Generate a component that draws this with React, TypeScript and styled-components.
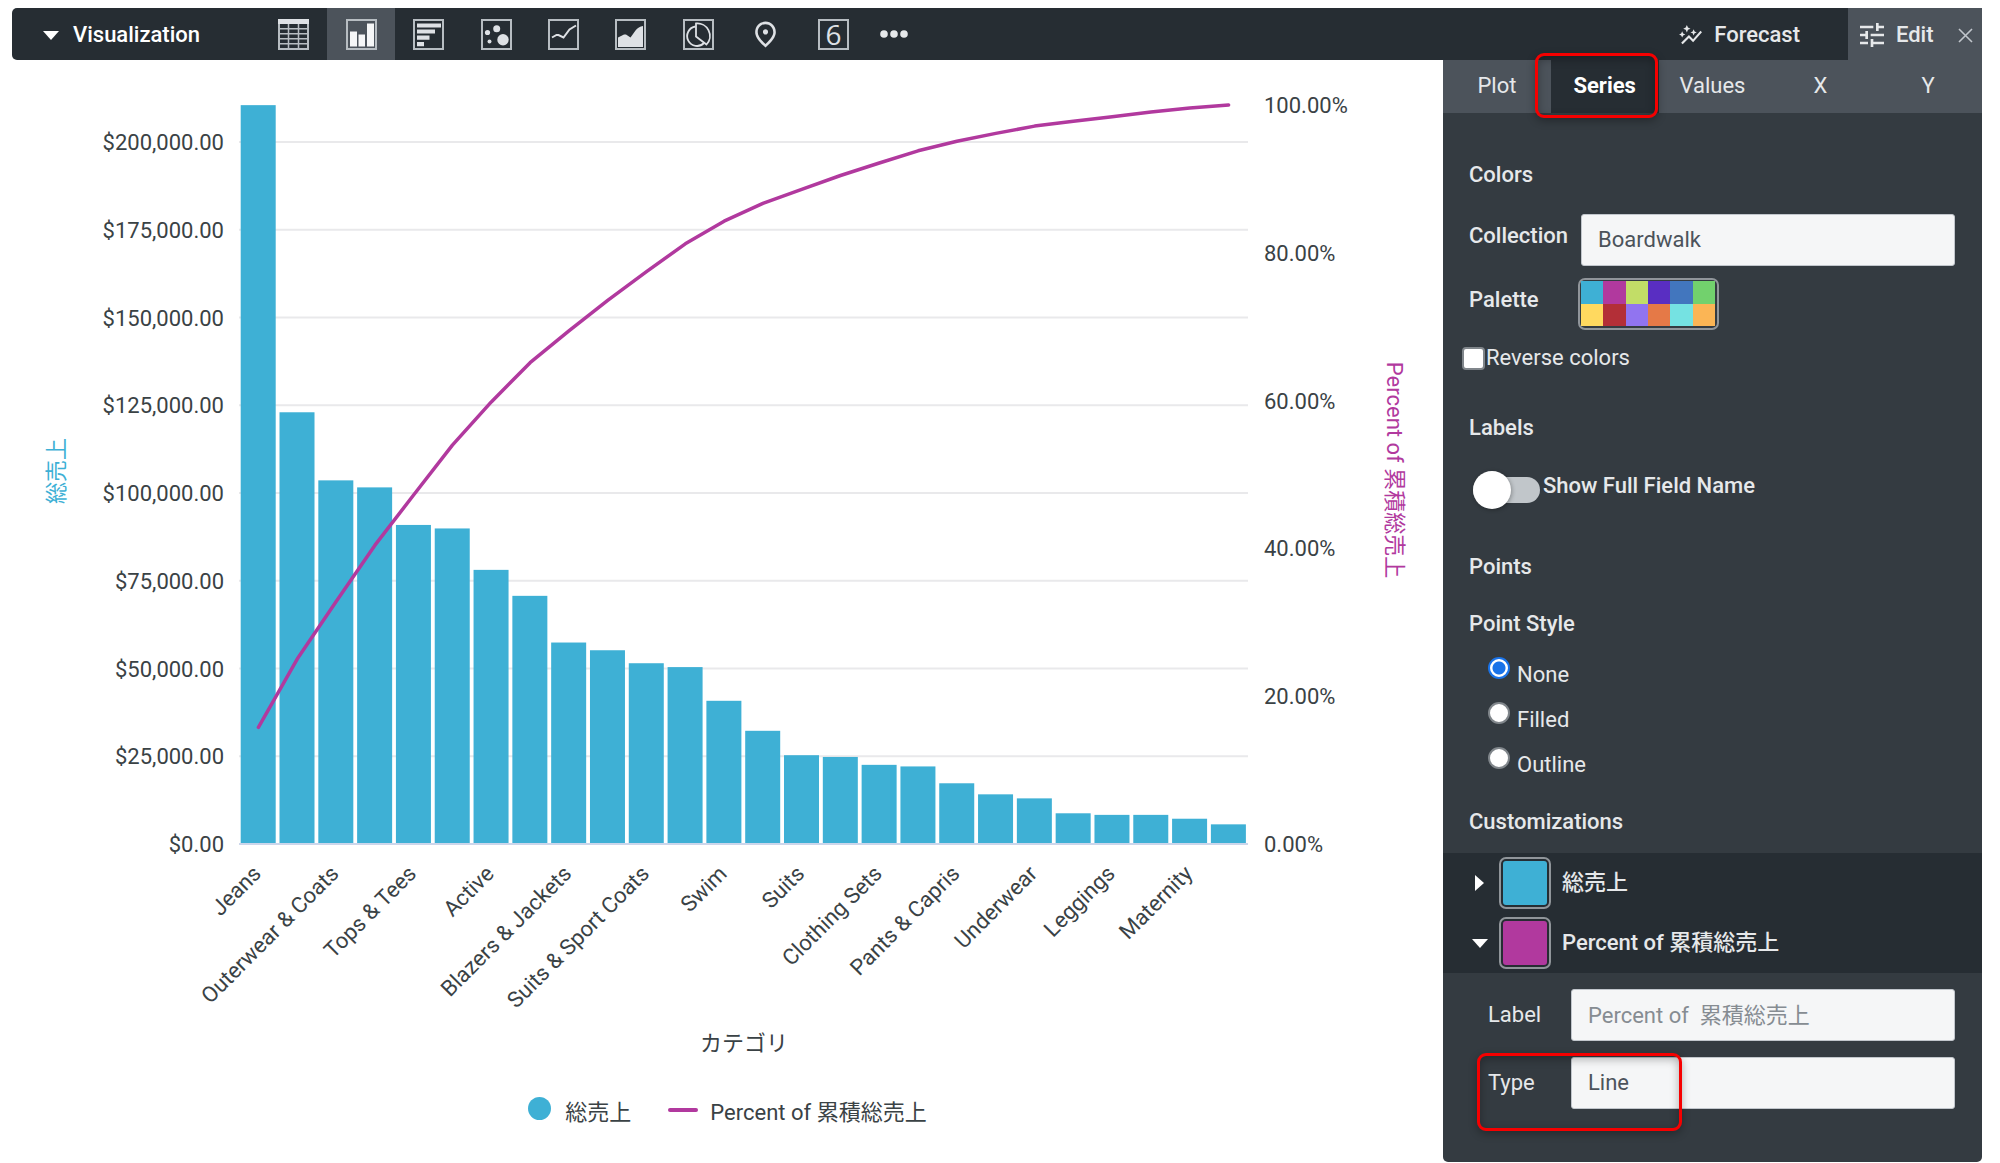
import React, { useState } from "react";
import styled, { createGlobalStyle, css } from "styled-components";
import { MdAutoGraph, MdOutlinePlace, MdTune } from "react-icons/md";

const color = {
  ink: "#262d33",
  panel: "#343b41",
  raised: "#4c535b",
  text: "#e6e8ea",
  chartText: "#3a4245",
  field: "#f5f6f7",
  blue: "#3eb0d5",
  magenta: "#b1399e",
  grid: "#e9e9eb",
  axis: "#ccd6eb",
  outline: "#90959a",
  callout: "#f60000",
};

const fontStack = `Roboto, "Noto Sans CJK JP", sans-serif`;

const GlobalStyle = createGlobalStyle`
  *, *::before, *::after { box-sizing: border-box; }
  body {
    margin: 0;
    background: #fff;
    color: ${color.chartText};
    font: 400 22px/26px ${fontStack};
  }
  button, input, select { font: inherit; color: inherit; }
  button { border: 0; padding: 0; background: none; cursor: pointer; }
  fieldset { border: 0; margin: 0; padding: 0; min-width: 0; }
`;

/* ---------- data ---------- */

const sales: [string, number][] = [
  ["Jeans", 210500],
  ["", 123000],
  ["Outerwear & Coats", 103600],
  ["", 101600],
  ["Tops & Tees", 90900],
  ["", 89900],
  ["Active", 78100],
  ["", 70700],
  ["Blazers & Jackets", 57400],
  ["", 55200],
  ["Suits & Sport Coats", 51500],
  ["", 50400],
  ["Swim", 40800],
  ["", 32250],
  ["Suits", 25300],
  ["", 24800],
  ["Clothing Sets", 22550],
  ["", 22100],
  ["Pants & Capris", 17300],
  ["", 14150],
  ["Underwear", 13000],
  ["", 8750],
  ["Leggings", 8300],
  ["", 8300],
  ["Maternity", 7200],
  ["", 5600],
];

const palette = [
  "#3eb0d5", "#b1399e", "#c2dd67", "#592ec2", "#4276be", "#72d16d",
  "#ffd95f", "#b32f37", "#9174f0", "#e57947", "#75e2e2", "#fbb555",
];

/* ---------- page ---------- */

const Page = styled.main`
  padding: 8px 18px 2px 12px;
`;

const Header = styled.header`
  display: flex;
  height: 52px;
  background: ${color.ink};
  border-radius: 5px 0 0 5px;
  color: ${color.text};
  font-weight: 500;
`;

const Body = styled.div`
  display: grid;
  grid-template-columns: minmax(0, 1fr) 539px;
  align-items: start;
`;

/* ---------- header ---------- */

const TitleButton = styled.button`
  display: flex;
  align-items: center;
  gap: 14px;
  width: 248px;
  padding: 2px 0 0 31px;
  color: #fff;
  font-weight: 500;
`;

const VizTypes = styled.nav`
  display: flex;
  width: 607px;
`;

const VizButton = styled.button<{ $active: boolean }>`
  flex: 1;
  display: grid;
  place-items: center;
  color: ${(p) => (p.$active ? "#f5f6f7" : "#dee1e5")};
  background: ${(p) => (p.$active ? color.raised : "transparent")};
`;

const MoreButton = styled.button`
  display: grid;
  place-items: center;
  width: 54px;
  color: ${color.text};
`;

const ForecastButton = styled.button`
  display: flex;
  align-items: center;
  gap: 11px;
  margin-left: auto;
  padding: 2px 48px 0 0;
`;

const EditGroup = styled.div`
  display: flex;
  justify-content: space-between;
  width: 134px;
  padding: 2px 8px 0;
  background: ${color.raised};
`;

const EditButton = styled.button`
  display: flex;
  align-items: center;
  gap: 8px;
`;

const CloseButton = styled.button`
  display: grid;
  place-items: center;
  width: 18px;
`;

/* ---------- chart ---------- */

const ChartFigure = styled.figure`
  margin: 0;
`;

const ChartSvg = styled.svg`
  display: block;
  width: 100%;
  height: auto;
  font-family: ${fontStack};
  font-size: 22px;
  fill: ${color.chartText};
`;

const Legend = styled.ul`
  display: flex;
  justify-content: center;
  gap: 37px;
  list-style: none;
  margin: 0;
  padding: 22px 0 0;
`;

const LegendItem = styled.li`
  display: flex;
  align-items: center;
  gap: 12px;
`;

const LegendMark = styled.span<{ $kind: "dot" | "line"; $color: string }>`
  background: ${(p) => p.$color};
  ${(p) =>
    p.$kind === "dot"
      ? css`
          width: 23px;
          height: 23px;
          margin: 0 2px 8px 0;
          border-radius: 50%;
        `
      : css`
          width: 30px;
          height: 4px;
          margin-bottom: 6px;
          border-radius: 2px;
        `}
`;

/* ---------- side panel ---------- */

const Panel = styled.aside`
  background: ${color.panel};
  border-radius: 0 0 5px 5px;
  color: ${color.text};
  padding-bottom: 53px;
`;

const Tabs = styled.div`
  display: flex;
  height: 53px;
  background: ${color.raised};
`;

const TabButton = styled.button<{ $active: boolean }>`
  position: relative;
  flex: 1;
  padding-bottom: 2px;
  background: ${(p) => (p.$active ? color.ink : "transparent")};
  color: ${(p) => (p.$active ? "#fff" : color.text)};
  font-weight: ${(p) => (p.$active ? 700 : 400)};
`;

const calloutBox = css`
  position: absolute;
  border: 3px solid ${color.callout};
  border-radius: 9px;
  box-shadow: 0 3px 8px rgba(0, 0, 0, 0.3), inset 0 3px 10px rgba(0, 0, 0, 0.3);
  pointer-events: none;
`;

const TabCallout = styled.span`
  ${calloutBox}
  inset: -7px 1px -5px -16px;
`;

const FieldCallout = styled.span`
  ${calloutBox}
  left: -11px;
  top: -4px;
  width: 205px;
  height: 78px;
`;

const Section = styled.section`
  padding: 0 27px 0 26px;
  margin-top: 44px;

  &:first-of-type {
    margin-top: 49px;
  }
`;

const Heading = styled.h2`
  margin: 0;
  font-size: 22px;
  line-height: 26px;
  font-weight: 500;
`;

const FieldRow = styled.div<{ $top: number }>`
  display: grid;
  grid-template-columns: 112px minmax(0, 1fr);
  align-items: start;
  margin-top: ${(p) => p.$top}px;
`;

const FieldLabel = styled.label`
  padding-top: 9px;
  font-weight: 500;
`;

const control = css`
  appearance: none;
  width: 100%;
  height: 52px;
  margin: 0;
  padding: 0 16px;
  border: 1px solid #c1c6cc;
  border-radius: 3px;
  background: ${color.field};
  color: #4c535b;
`;

const Select = styled.select`
  ${control}
`;

const TextInput = styled.input`
  ${control}
  &::placeholder {
    color: #868c92;
    opacity: 1;
  }
`;

const PaletteButton = styled.button`
  display: grid;
  grid-template-columns: repeat(6, 1fr);
  grid-template-rows: repeat(2, 1fr);
  width: 141px;
  height: 52px;
  margin-left: -3px;
  padding: 1px 2px 2px 1px;
  border: 2px solid ${color.outline};
  border-radius: 7px;
`;

const PaletteCell = styled.span<{ $color: string }>`
  background: ${(p) => p.$color};
`;

const CheckRow = styled.label`
  display: flex;
  align-items: center;
  gap: 1px;
  margin: 15px 0 0 -7px;
`;

const CheckBox = styled.input`
  appearance: none;
  width: 23px;
  height: 23px;
  margin: 0;
  border: 2px solid #80868b;
  border-radius: 4px;
  background: #fff;

  &:checked {
    background: #1a73e8;
  }
`;

const SwitchRow = styled.label`
  display: flex;
  align-items: start;
  gap: 3px;
  margin: 32px 0 0 4px;
  padding-bottom: 7px;
  font-weight: 500;
`;

const Switch = styled.input`
  appearance: none;
  display: flex;
  align-items: center;
  width: 67px;
  height: 26px;
  margin: 4px 0 0;
  border-radius: 13px;
  background: #c1c6ca;

  &::before {
    content: "";
    flex: none;
    width: 38px;
    height: 38px;
    border-radius: 50%;
    background: #fff;
    box-shadow: 1px 1px 4px rgba(0, 0, 0, 0.3);
  }

  &:checked::before {
    margin-left: auto;
  }
`;

const RadioGroup = styled.fieldset`
  margin-top: 31px;
`;

const RadioLegend = styled.legend`
  padding: 0;
  font-weight: 500;
`;

const RadioList = styled.div`
  display: grid;
  gap: 14px;
  padding: 20px 0 0 19px;
`;

const RadioRow = styled.label`
  display: flex;
  align-items: start;
  gap: 7px;
`;

const RadioText = styled.span`
  padding-top: 5px;
`;

const Radio = styled.input`
  appearance: none;
  width: 22px;
  height: 22px;
  margin: 0;
  border: 2px solid #80868b;
  border-radius: 50%;
  background: #fff;

  &:checked {
    border-color: #1a73e8;
    background: radial-gradient(circle, #1a73e8 6px, #fff 7px);
  }
`;

const CustomSection = styled.section`
  margin-top: 31px;
`;

const CustomHeading = styled(Heading)`
  padding: 0 26px;
`;

const SeriesList = styled.div`
  margin-top: 18px;
  background: ${color.ink};
`;

const SeriesRow = styled.div`
  display: flex;
  align-items: center;
  height: 60px;
  padding-left: 26px;
  font-weight: 500;
`;

const DisclosureButton = styled.button`
  display: grid;
  place-items: center;
  width: 21px;
  height: 30px;
  margin-right: 9px;
`;

const Swatch = styled.button<{ $color: string }>`
  width: 52px;
  height: 52px;
  margin-right: 11px;
  padding: 2px;
  border: 2px solid ${color.outline};
  border-radius: 7px;
  background: ${(p) => p.$color} content-box;
`;

const SeriesFields = styled.div`
  display: grid;
  gap: 16px;
  padding: 16px 27px 0 45px;
`;

const SeriesField = styled.div`
  position: relative;
  display: grid;
  grid-template-columns: 83px minmax(0, 1fr);
  align-items: center;
`;

/* ---------- icons ---------- */

const FrameSvg = styled.svg`
  overflow: visible;
`;

const Frame = ({ children }: { children: React.ReactNode }) => (
  <FrameSvg width="31" height="31" viewBox="0 0 31 31" aria-hidden="true">
    <rect x="1" y="1" width="29" height="29" fill="none" stroke="#b7bdc2" strokeWidth="2" />
    {children}
  </FrameSvg>
);

const TableIcon = () => (
  <Frame>
    <path d="M0 0h31v5H0z" fill="currentColor" />
    <path d="M1 9.8h29M1 14.8h29M1 19.8h29M1 24.8h29M10.5 5v25M20.5 5v25" stroke="#b7bdc2" strokeWidth="1.5" />
  </Frame>
);
const ColumnIcon = () => (
  <Frame>
    <path d="M4 12.5h7v15H4zM12.5 15.5H19v12h-6.500zM21 4.500h7v23h-7z" fill="currentColor" />
  </Frame>
);
const BarIcon = () => (
  <Frame>
    <path d="M4 4.500h24v4H4zM4 10.500h18v4H4zM4 16.500h12.500v4.200H4zM4 23h7v4.200H4z" fill="currentColor" />
  </Frame>
);
const ScatterIcon = () => (
  <Frame>
    <g fill="currentColor">
      <circle cx="6.500" cy="13.500" r="2.600" />
      <circle cx="15.700" cy="9.700" r="3.500" />
      <circle cx="8.500" cy="22.500" r="2" />
      <circle cx="22" cy="20.700" r="5.700" />
    </g>
  </Frame>
);
const LineIcon = () => (
  <Frame>
    <path d="M4 18.500l4.500-2.500 2 0 5 2.500 6-8 6.500-4" fill="none" stroke="currentColor" strokeWidth="2" />
  </Frame>
);
const AreaIcon = () => (
  <Frame>
    <path d="M3 18.500l6-3h2l4.500 3 5-7q3-4 7.500-4.500V28H3z" fill="currentColor" />
  </Frame>
);
const PieIcon = () => (
  <Frame>
    <g fill="none" stroke="currentColor" strokeWidth="1.800">
      <path d="M12.500 7.500A9.800 9.800 0 1 0 21 24" />
      <path d="M13 4.500V17.500L23.500 25.500A12.500 12.500 0 0 0 13 4.500z" />
    </g>
  </Frame>
);
const SingleValueIcon = () => (
  <Frame>
    <text x="15.500" y="25.500" textAnchor="middle" fontFamily="'Open Sans', sans-serif" fontSize="28" fontWeight="400" fill="currentColor">
      6
    </text>
  </Frame>
);

const vizTypes = [
  { name: "Table", icon: <TableIcon /> },
  { name: "Column", icon: <ColumnIcon /> },
  { name: "Bar", icon: <BarIcon /> },
  { name: "Scatterplot", icon: <ScatterIcon /> },
  { name: "Line", icon: <LineIcon /> },
  { name: "Area", icon: <AreaIcon /> },
  { name: "Pie", icon: <PieIcon /> },
  { name: "Map", icon: <MdOutlinePlace size={31} /> },
  { name: "Single value", icon: <SingleValueIcon /> },
];

const Caret = ({ open }: { open: boolean }) =>
  open ? (
    <svg width="16" height="9" viewBox="0 0 16 9" aria-hidden="true">
      <path d="M0 0h16L8 9z" fill="#fff" />
    </svg>
  ) : (
    <svg width="9" height="16" viewBox="0 0 9 16" aria-hidden="true">
      <path d="M0 0v16l9-8z" fill="#fff" />
    </svg>
  );

/* ---------- chart ---------- */

const plot = { left: 227, right: 1236, top: 45, bottom: 784 };
const unitsPerDollar = 87.75 / 25000;

const usd = new Intl.NumberFormat("en-US", { style: "currency", currency: "USD" });

function ParetoChart() {
  const pitch = (plot.right - plot.left) / sales.length;
  const total = sales.reduce((sum, [, v]) => sum + v, 0);
  let running = 0;
  const linePoints = sales
    .map(([, v], i) => {
      running += v;
      const x = plot.left + pitch * (i + 0.5);
      const y = plot.bottom - (running / total) * (plot.bottom - plot.top);
      return `${x.toFixed(1)},${y.toFixed(1)}`;
    })
    .join(" ");
  const dollarTicks = Array.from({ length: 9 }, (_, i) => i * 25000);
  const percentTicks = [0, 20, 40, 60, 80, 100];

  return (
    <ChartSvg viewBox="0 0 1431 1015" role="img" aria-label="総売上 / Percent of 累積総売上">
      {dollarTicks.map((v) => {
        const y = plot.bottom - v * unitsPerDollar;
        return (
          <g key={v}>
            <line x1={plot.left} x2={plot.right} y1={y} y2={y} stroke={v ? color.grid : color.axis} strokeWidth="2" />
            <text x="212" y={y + 8} textAnchor="end">
              {usd.format(v)}
            </text>
          </g>
        );
      })}
      {percentTicks.map((p) => (
        <text key={p} x="1252" y={plot.bottom - (p / 100) * (plot.bottom - plot.top) + 8}>
          {p.toFixed(2)}%
        </text>
      ))}
      {sales.map(([, v], i) => (
        <rect
          key={i}
          x={plot.left + pitch * i + 1.7}
          y={plot.bottom - v * unitsPerDollar}
          width="35"
          height={v * unitsPerDollar - 1}
          fill={color.blue}
        />
      ))}
      <polyline points={linePoints} fill="none" stroke={color.magenta} strokeWidth="3.500" strokeLinejoin="round" strokeLinecap="round" />
      {sales.map(([name], i) => {
        if (!name) return null;
        const x = plot.left + pitch * (i + 0.5) + 4;
        return (
          <text key={name} x={x} y="815" textAnchor="end" transform={`rotate(-45 ${x} 815)`}>
            {name}
          </text>
        );
      })}
      <text x="52" y="411" textAnchor="middle" transform="rotate(-90 52 411)" fill={color.blue}>
        総売上
      </text>
      <text x="1375" y="410" textAnchor="middle" transform="rotate(90 1375 410)" fill={color.magenta}>
        Percent of 累積総売上
      </text>
      <text x="732" y="991" textAnchor="middle">
        カテゴリ
      </text>
    </ChartSvg>
  );
}

/* ---------- app ---------- */

const tabs = ["Plot", "Series", "Values", "X", "Y"];
const pointStyles = ["None", "Filled", "Outline"];

export default function App() {
  const [viz, setViz] = useState("Column");
  const [tab, setTab] = useState("Series");
  const [pointStyle, setPointStyle] = useState("None");

  return (
    <>
      <GlobalStyle />
      <Page>
        <Header>
          <TitleButton type="button">
            <Caret open />
            Visualization
          </TitleButton>
          <VizTypes aria-label="Visualization type">
            {vizTypes.map((t) => (
              <VizButton key={t.name} type="button" aria-label={t.name} $active={t.name === viz} onClick={() => setViz(t.name)}>
                {t.icon}
              </VizButton>
            ))}
          </VizTypes>
          <MoreButton type="button" aria-label="More">
            <svg width="28" height="8" viewBox="0 0 28 8" fill="currentColor" aria-hidden="true">
              <circle cx="4" cy="4" r="3.800" />
              <circle cx="14" cy="4" r="3.800" />
              <circle cx="24" cy="4" r="3.800" />
            </svg>
          </MoreButton>
          <ForecastButton type="button">
            <MdAutoGraph size={25} />
            Forecast
          </ForecastButton>
          <EditGroup>
            <EditButton type="button">
              <MdTune size={32} />
              Edit
            </EditButton>
            <CloseButton type="button" aria-label="Close">
              <svg width="15" height="15" viewBox="0 0 15 15" aria-hidden="true">
                <path d="M1 1l13 13M14 1L1 14" stroke="#c1c6cc" strokeWidth="1.600" />
              </svg>
            </CloseButton>
          </EditGroup>
        </Header>

        <Body>
          <ChartFigure>
            <ParetoChart />
            <Legend>
              <LegendItem>
                <LegendMark $kind="dot" $color={color.blue} />
                総売上
              </LegendItem>
              <LegendItem>
                <LegendMark $kind="line" $color={color.magenta} />
                Percent of 累積総売上
              </LegendItem>
            </Legend>
          </ChartFigure>

          <Panel>
            <Tabs role="tablist">
              {tabs.map((t) => (
                <TabButton key={t} type="button" role="tab" aria-selected={t === tab} $active={t === tab} onClick={() => setTab(t)}>
                  {t}
                  {t === "Series" && <TabCallout />}
                </TabButton>
              ))}
            </Tabs>

            <Section>
              <Heading>Colors</Heading>
              <FieldRow $top={26}>
                <FieldLabel htmlFor="collection">Collection</FieldLabel>
                <Select id="collection" defaultValue="Boardwalk">
                  <option>Boardwalk</option>
                </Select>
              </FieldRow>
              <FieldRow $top={12}>
                <FieldLabel htmlFor="palette">Palette</FieldLabel>
                <PaletteButton id="palette" type="button">
                  {palette.map((c) => (
                    <PaletteCell key={c} $color={c} />
                  ))}
                </PaletteButton>
              </FieldRow>
              <CheckRow>
                <CheckBox type="checkbox" />
                Reverse colors
              </CheckRow>
            </Section>

            <Section>
              <Heading>Labels</Heading>
              <SwitchRow>
                <Switch type="checkbox" role="switch" />
                Show Full Field Name
              </SwitchRow>
            </Section>

            <Section>
              <Heading>Points</Heading>
              <RadioGroup>
                <RadioLegend>Point Style</RadioLegend>
                <RadioList>
                  {pointStyles.map((s) => (
                    <RadioRow key={s}>
                      <Radio type="radio" name="point-style" checked={s === pointStyle} onChange={() => setPointStyle(s)} />
                      <RadioText>{s}</RadioText>
                    </RadioRow>
                  ))}
                </RadioList>
              </RadioGroup>
            </Section>

            <CustomSection>
              <CustomHeading>Customizations</CustomHeading>
              <SeriesList>
                <SeriesRow>
                  <DisclosureButton type="button" aria-label="Expand" aria-expanded={false}>
                    <Caret open={false} />
                  </DisclosureButton>
                  <Swatch type="button" aria-label="Color" $color={color.blue} />
                  総売上
                </SeriesRow>
                <SeriesRow>
                  <DisclosureButton type="button" aria-label="Collapse" aria-expanded>
                    <Caret open />
                  </DisclosureButton>
                  <Swatch type="button" aria-label="Color" $color={color.magenta} />
                  Percent of 累積総売上
                </SeriesRow>
              </SeriesList>
              <SeriesFields>
                <SeriesField>
                  <label htmlFor="series-label">Label</label>
                  <TextInput id="series-label" type="text" placeholder={"Percent of  累積総売上"} />
                </SeriesField>
                <SeriesField>
                  <label htmlFor="series-type">Type</label>
                  <Select id="series-type" defaultValue="Line">
                    <option>Line</option>
                  </Select>
                  <FieldCallout />
                </SeriesField>
              </SeriesFields>
            </CustomSection>
          </Panel>
        </Body>
      </Page>
    </>
  );
}
